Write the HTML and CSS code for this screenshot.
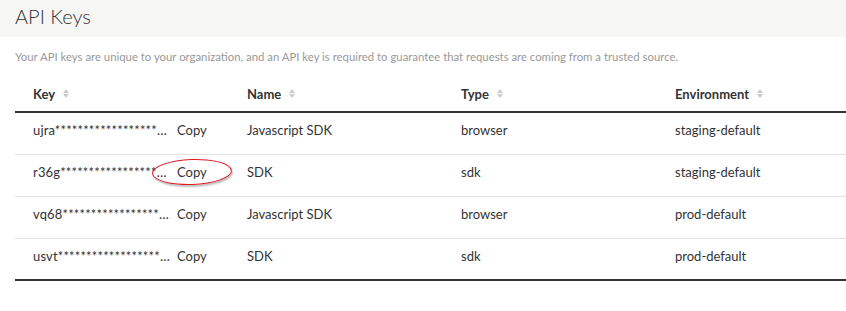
FILE: index.html
```html
<!DOCTYPE html>
<html lang="en">
<head>
    <meta charset="UTF-8">
    <title>API Keys</title>
    <link rel="stylesheet" href="styles.css">
</head>
<body>

    <div class="page-header">
        <h1>API Keys</h1>
    </div>

    <p class="intro">Your API keys are unique to your organization, and an API key is required to guarantee that requests are coming from a trusted source.</p>

    <div class="keys-table">
        <div class="row head">
            <div class="cell">Key <span class="sort"></span></div>
            <div class="cell">Name <span class="sort"></span></div>
            <div class="cell">Type <span class="sort"></span></div>
            <div class="cell">Environment <span class="sort"></span></div>
        </div>
        <div class="row">
            <div class="cell key"><span class="masked">ujra******************…</span><a class="copy">Copy</a></div>
            <div class="cell">Javascript SDK</div>
            <div class="cell">browser</div>
            <div class="cell">staging-default</div>
        </div>
        <div class="row">
            <div class="cell key"><span class="masked">r36g*****************…</span><a class="copy marked">Copy</a></div>
            <div class="cell">SDK</div>
            <div class="cell">sdk</div>
            <div class="cell">staging-default</div>
        </div>
        <div class="row">
            <div class="cell key"><span class="masked">vq68*****************…</span><a class="copy">Copy</a></div>
            <div class="cell">Javascript SDK</div>
            <div class="cell">browser</div>
            <div class="cell">prod-default</div>
        </div>
        <div class="row last">
            <div class="cell key"><span class="masked">usvt******************…</span><a class="copy">Copy</a></div>
            <div class="cell">SDK</div>
            <div class="cell">sdk</div>
            <div class="cell">prod-default</div>
        </div>
    </div>

</body>
</html>
```

FILE: styles.css
```css
* {
    margin: 0;
    padding: 0;
    box-sizing: border-box;
}

body {
    font-family: Lato, 'Noto Sans', sans-serif;
    color: #333;
    background: #fff;
    overflow: hidden;
    width: 846px;
}

.page-header {
    background: #f6f6f5;
    height: 37px;
    padding: 3px 15px 0;
}

.page-header h1 {
    font-size: 20px;
    font-weight: 300;
    line-height: 26px;
    color: #333;
}

.intro {
    font-size: 11.35px;
    color: #999;
    padding: 13px 15px 0;
    line-height: 14px;
    white-space: nowrap;
}

.keys-table {
    margin: 14px 0 0 15px;
    width: 856px;
}

.row {
    display: grid;
    grid-template-columns: repeat(4, 214px);
    height: 42px;
    align-items: start;
    padding-top: 9px;
    border-bottom: 1px solid #e3e3e3;
    font-size: 13px;
    line-height: 16px;
}

.row.head {
    height: 35px;
    align-items: center;
    padding-top: 0;
    border-bottom: 2px solid #333;
    font-weight: 700;
    padding-bottom: 2px;
}

.row.last {
    border-bottom: 2px solid #333;
}

.cell {
    padding-left: 18px;
    white-space: nowrap;
    display: flex;
    align-items: center;
}

.sort {
    display: inline-block;
    width: 7px;
    height: 9px;
    margin-left: 8px;
    position: relative;
}

.sort::before,
.sort::after {
    content: "";
    position: absolute;
    left: 0;
    border-left: 3.5px solid transparent;
    border-right: 3.5px solid transparent;
}

.sort::before {
    top: 0;
    border-bottom: 4px solid #ccc;
}

.sort::after {
    bottom: 0;
    border-top: 4px solid #ccc;
}

.masked {
    display: inline-block;
    width: 136px;
    letter-spacing: 0.15px;
}

.copy {
    margin-left: 8px;
    color: #333;
    cursor: pointer;
    position: relative;
}

/* red annotation circle round the second copy link */
.copy.marked::after {
    content: "";
    position: absolute;
    left: -25px;
    top: -5px;
    width: 78px;
    height: 24px;
    border: 1.5px solid #e0191f;
    border-radius: 50%;
    box-shadow: 1px 2px 2px rgba(0, 0, 0, 0.25);
    transform: rotate(-2deg);
}
```
